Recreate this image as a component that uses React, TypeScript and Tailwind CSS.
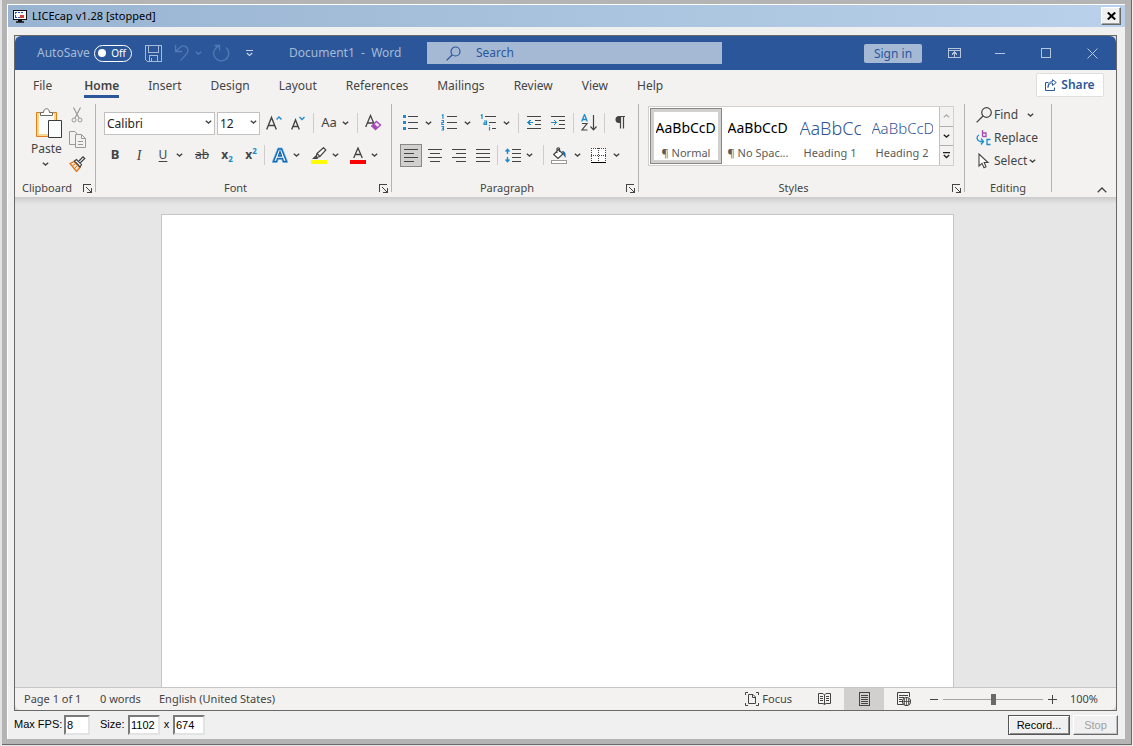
import type { ReactNode } from "react";

const INK = "#444444";
const BLUE = "#1e8bcd";

function Svg({ w, h, crisp = false, children }: { w: number; h: number; crisp?: boolean; children: ReactNode }) {
  return (
    <svg
      width={w}
      height={h}
      viewBox={`0 0 ${w} ${h}`}
      fill="none"
      shapeRendering={crisp ? "crispEdges" : undefined}
      className="shrink-0"
      aria-hidden="true"
    >
      {children}
    </svg>
  );
}

function Chevron({ color = INK }: { color?: string }) {
  return (
    <Svg w={7} h={4}>
      <path d="M0.8 0.7 3.5 3 6.2 0.7" stroke={color} strokeWidth="1.4" />
    </Svg>
  );
}

/* horizontal strokes given as [x, y, length] */
function Lines({ rows, color = INK }: { rows: number[][]; color?: string }) {
  return (
    <>
      {rows.map(([x, y, l], i) => (
        <rect key={i} x={x} y={y} width={l} height="1" fill={color} />
      ))}
    </>
  );
}

function IconButton({ label, children }: { label: string; children: ReactNode }) {
  return (
    <button aria-label={label} className="flex h-6 w-6 shrink-0 items-center justify-center">
      {children}
    </button>
  );
}

function Split({ label, wide = false, children }: { label: string; wide?: boolean; children: ReactNode }) {
  return (
    <div className="flex shrink-0 items-center">
      <IconButton label={label}>{children}</IconButton>
      <button
        aria-label={`${label} options`}
        className={wide ? "flex h-6 w-3 items-center justify-center" : "flex h-6 w-2 items-center justify-center"}
      >
        <Chevron />
      </button>
    </div>
  );
}

function Divider() {
  return <div className="mx-[3px] h-5 w-px shrink-0 bg-[#cfcdcb]" />;
}

function Launcher({ label }: { label: string }) {
  return (
    <button aria-label={label} className="flex h-4 w-3 items-center">
      <Svg w={9} h={9} crisp>
        <path d="M0.5 8V0.5H8M8.5 4V8.5H4M3 3l5 5" stroke={INK} />
      </Svg>
    </button>
  );
}

function Group({ name, launcher, className, children }: { name: string; launcher?: boolean; className: string; children: ReactNode }) {
  return (
    <>
      <section aria-label={name} className={`flex h-[92px] shrink-0 flex-col justify-between ${className}`}>
        <div>{children}</div>
        <div className="flex h-4 items-center text-[11px]">
          <span className={launcher ? "flex-1 pr-1 text-center" : "flex-1 text-center"}>{name}</span>
          {launcher && <Launcher label={`${name} settings`} />}
        </div>
      </section>
      <div className="h-[88px] w-px shrink-0 bg-[#b5b3b1]" />
    </>
  );
}

function Combo({ label, value, className }: { label: string; value: string; className: string }) {
  return (
    <div className={`relative shrink-0 ${className}`}>
      <select
        aria-label={label}
        className="h-[23px] w-full appearance-none border border-[#c3c1bf] bg-white px-[2px] text-[12px] text-[#222]"
      >
        <option>{value}</option>
      </select>
      <span className="pointer-events-none absolute top-[10px] right-[3px]">
        <Chevron />
      </span>
    </div>
  );
}

function TitleBar() {
  return (
    <header className="flex h-[34px] shrink-0 items-center bg-[#2b579a] text-[12px] text-[#a6bad6]">
      <div className="flex w-[412px] shrink-0 items-center pl-[22px]">
        <span className="w-[57px]">AutoSave</span>
        <button
          role="switch"
          aria-checked="false"
          aria-label="AutoSave"
          className="flex h-[17px] w-[38px] items-center justify-between rounded-full border border-white pr-[5px] pl-[3px] text-[10px] text-white"
        >
          <span className="h-2 w-2 rounded-full bg-white" />
          Off
        </button>
        <button aria-label="Save" className="ml-[13px]">
          <Svg w={17} h={17} crisp>
            <path d="M0.5 0.5H16.5V16.5H2.5L0.5 14.5ZM3.5 0.5V7.5H13.5V0.5M4.5 16.5V10.5H12.5V16.5M6.5 13v3" stroke="#a6bad6" />
          </Svg>
        </button>
        <button aria-label="Undo" className="ml-3">
          <Svg w={16} h={18}>
            <path d="M1.5 1V7.5H8M2 7 6.500 3C9.500 0.500 14 2.500 14 6.500C14 9 12.500 10 6.500 16.500" stroke="#5279b3" strokeWidth="1.300" />
          </Svg>
        </button>
        <button aria-label="Undo history" className="ml-[5px]">
          <Chevron color="#5279b3" />
        </button>
        <button aria-label="Repeat" className="ml-[10px]">
          <Svg w={18} h={18}>
            <path d="M2.500 1.500H7.500V6.500M14 3.500A7.500 7.500 0 1 1 7.500 2" stroke="#5279b3" strokeWidth="1.300" />
          </Svg>
        </button>
        <button aria-label="Customize toolbar" className="ml-4">
          <Svg w={7} h={7}>
            <path d="M0 0.500H7M0.800 3 3.500 5.500 6.200 3" stroke="#c4d1e4" strokeWidth="1.200" />
          </Svg>
        </button>
        <span className="ml-9 whitespace-pre">Document1  -  Word</span>
      </div>
      <div className="flex h-[22px] w-[295px] items-center bg-[#a5b9d4] pl-[19px] text-[#2b579a]">
        <Svg w={15} h={15}>
          <circle cx="9.500" cy="5.500" r="4.500" stroke="#2b579a" strokeWidth="1.200" />
          <path d="M6.300 8.700 0.600 14.400" stroke="#2b579a" strokeWidth="1.300" />
        </Svg>
        <input
          aria-label="Search"
          placeholder="Search"
          className="ml-[15px] w-0 flex-1 bg-transparent text-[12px] outline-none placeholder:text-[#2b579a]"
        />
      </div>
      <div className="flex-1" />
      <button className="h-[19px] w-[58px] rounded-xs bg-[#a5b9d4] text-[12px] leading-[19px] text-[#2b579a]">Sign in</button>
      <div className="ml-[9px] flex pr-px">
        <button aria-label="Ribbon display options" className="flex w-[46px] justify-center">
          <Svg w={13} h={10} crisp>
            <path d="M0.500 0.500H12.500V9.500H0.500ZM0.500 2.500H12.500M6.500 9V4M4 6.500 6.500 4 9 6.500" stroke="#b4c5dc" />
          </Svg>
        </button>
        <button aria-label="Minimize" className="flex w-[46px] items-center justify-center">
          <span className="h-px w-[10px] bg-[#b4c5dc]" />
        </button>
        <button aria-label="Maximize" className="flex w-[46px] items-center justify-center">
          <span className="h-[10px] w-[10px] border border-[#b4c5dc]" />
        </button>
        <button aria-label="Close document" className="flex w-[46px] items-center justify-center">
          <Svg w={11} h={11}>
            <path d="M0.500 0.500 10.500 10.500M10.500 0.500 0.500 10.500" stroke="#b4c5dc" />
          </Svg>
        </button>
      </div>
    </header>
  );
}

function Tabs() {
  return (
    <nav className="flex h-[30px] shrink-0 items-center justify-between pr-3 pl-[18px] text-[12px]">
      <div className="flex gap-[29px] pt-[2px]">
        <a href="#file">File</a>
        <a href="#home" className="relative ml-[3px] font-semibold">
          Home
          <span className="absolute top-[18px] left-0 h-[3px] w-full bg-[#2b579a]" />
        </a>
        <a href="#insert">Insert</a>
        <a href="#design">Design</a>
        <a href="#layout">Layout</a>
        <a href="#references">References</a>
        <a href="#mailings">Mailings</a>
        <a href="#review">Review</a>
        <a href="#view">View</a>
        <a href="#help">Help</a>
      </div>
      <button className="flex h-6 w-[68px] items-center justify-center gap-1 rounded-xs border border-[#e1dfdd] bg-white font-semibold text-[#2b579a]">
        <Svg w={12} h={12}>
          <path d="M3.500 3.500H0.500V11.500H9.500V8.500M3 8.500C3.500 5 5.500 4 7.500 4V6.500L11.300 3.500 7.500 0.700V2.500C4.500 2.500 3 5 3 8.500Z" stroke="#2b579a" />
        </Svg>
        Share
      </button>
    </nav>
  );
}

function ClipboardGroup() {
  return (
    <Group name="Clipboard" launcher className="w-[80px]">
      <div className="flex pt-[3px] pl-4">
        <button className="flex w-8 flex-col items-center text-[12px] leading-5">
          <span className="pl-1">
            <Svg w={28} h={32}>
              <path d="M1.500 5.500H21.500V29.500H1.500Z" fill="#f9d98f" stroke="#e07f1c" />
              <rect x="4" y="7" width="15" height="20" fill="#fafdfb" />
              <path d="M5.500 8.500V5.500H8.500C8.500 0.500 14.500 0.500 14.500 5.500H17.500V8.500Z" fill="#fff" stroke="#6b6b6b" />
              <path d="M13.500 13.500H26.500V30.500H13.500Z" fill="#fafdfb" stroke="#3b3b3b" />
            </Svg>
          </span>
          <span className="w-full pr-1 text-center">Paste</span>
          <span className="pt-[3px] pr-[3px]"><Chevron /></span>
        </button>
        <div className="flex flex-col gap-2 pl-[6px]">
          <button aria-label="Cut">
            <Svg w={16} h={16}>
              <path d="M4.500 0.500 10 11M11.500 0.500 6 11" stroke="#999" strokeWidth="1.200" />
              <circle cx="5" cy="13" r="2" stroke="#999" />
              <circle cx="11" cy="13" r="2" stroke="#999" />
            </Svg>
          </button>
          <button aria-label="Copy">
            <Svg w={17} h={17}>
              <path d="M6.500 13.500H0.500V0.500H6L8 3M6.500 3.500H12.500L16.500 7.500V16.500H6.500ZM12.500 3.500V7.500H16.500M9 10.500H14M9 13.500H14" stroke="#999" />
            </Svg>
          </button>
          <button aria-label="Format painter">
            <Svg w={17} h={16}>
              <path d="M1 7.500 5 5.500 11 11.500 7.500 15.500Z" fill="#fce3c8" stroke="#e0761b" strokeWidth="1.300" />
              <path d="M3.500 10 6 8M5.500 12.500 8 10" stroke="#e0761b" />
              <path d="M5.500 5 7.500 3.500 12.500 8.500 11 11ZM9.500 5.500 14 0.800 15.800 2.500 11 7" fill="#fff" stroke="#444" strokeWidth="1.200" />
            </Svg>
          </button>
        </div>
      </div>
    </Group>
  );
}

function FontGroup() {
  return (
    <Group name="Font" launcher className="w-[295px]">
      <div className="flex h-8 items-center pt-[5px] pl-2">
        <Combo label="Font name" value="Calibri" className="w-[111px]" />
        <Combo label="Font size" value="12" className="ml-[2px] w-[43px]" />
        <div className="w-[2px]" />
        <IconButton label="Grow font">
          <Svg w={16} h={16}>
            <path d="M0.700 14.500 5.500 2.500 10.300 14.500M2.400 10.500H8.600" stroke={INK} strokeWidth="1.400" />
            <path d="M10.500 4.500 13 2 15.500 4.500" stroke={BLUE} strokeWidth="1.400" />
          </Svg>
        </IconButton>
        <IconButton label="Shrink font">
          <Svg w={14} h={16}>
            <path d="M0.700 14.500 4.500 5 8.300 14.500M2 11.500H7" stroke={INK} strokeWidth="1.400" />
            <path d="M8.500 2 11 4.500 13.500 2" stroke={BLUE} strokeWidth="1.400" />
          </Svg>
        </IconButton>
        <Divider />
        <Split label="Change case"><span className="text-[13px]">Aa</span></Split>
        <div className="w-[5px]" />
        <Divider />
        <IconButton label="Clear formatting">
          <Svg w={17} h={17}>
            <path d="M0.700 13 5.500 1.500 9.500 11M2.400 9H8" stroke={INK} strokeWidth="1.300" />
            <path d="M11.500 7.500 15.500 11 10.500 15.500 6.800 12Z" fill="#f3e3f6" stroke="#a64bb5" strokeWidth="1.400" />
            <path d="M6.800 12 9.200 9.800 12.900 13.300 10.500 15.500Z" fill="#a64bb5" />
          </Svg>
        </IconButton>
      </div>
      <div className="flex h-8 items-center pt-[6px] pl-[7px]">
        <IconButton label="Bold"><span className="text-[13px] font-bold">B</span></IconButton>
        <IconButton label="Italic"><span className="font-['Liberation_Serif',serif] text-[14px] italic">I</span></IconButton>
        <Split label="Underline"><span className="text-[12px] underline underline-offset-2">U</span></Split>
        <div className="w-[7px]" />
        <IconButton label="Strikethrough"><span className="text-[12px] line-through">ab</span></IconButton>
        <div className="w-px" />
        <IconButton label="Subscript">
          <span className="text-[12px] font-bold">x</span><span className="pt-2 text-[8px] font-bold text-[#1e8bcd]">2</span>
        </IconButton>
        <IconButton label="Superscript">
          <span className="text-[12px] font-bold">x</span><span className="pb-2 text-[8px] font-bold text-[#1e8bcd]">2</span>
        </IconButton>
        <div className="ml-px h-5 w-px shrink-0 bg-[#cfcdcb]" />
        <div className="w-[3px]" />
        <Split label="Text effects">
          <Svg w={16} h={16}>
            <path d="M1.500 14.500 6.500 2H9.500L14.500 14.500H11.500L10.500 11.500H5.500L4.500 14.500ZM6.500 9H9.500L8 4.500Z" fill="#fff" stroke="#8cc4ee" strokeWidth="3" />
            <path d="M1.500 14.500 6.500 2H9.500L14.500 14.500H11.500L10.500 11.500H5.500L4.500 14.500ZM6.500 9H9.500L8 4.500Z" fill="#fff" stroke="#1569b0" strokeWidth="1.400" />
          </Svg>
        </Split>
        <div className="w-[7px]" />
        <Split label="Highlight color">
          <Svg w={16} h={17}>
            <path d="M6 6.500 12.500 0.700 14.800 3 9 9.500ZM6 6.500 5 10.500 9 9.500M5 9 2.500 11.500H6L7 10.500" fill="#fff" stroke={INK} strokeWidth="1.200" />
            <rect y="13" width="16" height="4" fill="#ff0" />
          </Svg>
        </Split>
        <div className="w-[7px]" />
        <Split label="Font color">
          <Svg w={16} h={17}>
            <path d="M3.700 11 8 1 12.300 11M5.200 7.500H10.800" stroke={INK} strokeWidth="1.300" />
            <rect y="13" width="16" height="4" fill="#f00" />
          </Svg>
        </Split>
      </div>
    </Group>
  );
}

function ParagraphGroup() {
  return (
    <Group name="Paragraph" launcher className="w-[246px]">
      <div className="flex h-8 items-center pt-[5px] pl-[6px]">
        <Split label="Bullets" wide>
          <Svg w={15} h={15} crisp>
            <rect width="3" height="3" fill={BLUE} />
            <rect y="6" width="3" height="3" fill={BLUE} />
            <rect y="12" width="3" height="3" fill={BLUE} />
            <Lines rows={[[5, 1, 10], [5, 7, 10], [5, 13, 10]]} />
          </Svg>
        </Split>
        <div className="w-[3px]" />
        <Split label="Numbering" wide>
          <Svg w={16} h={17}>
            <path d="M0.800 1.500 2 0.800V5M0.500 6.500H2.500V8.500H0.800V10.500H3M0.500 12.500H2.500V16H0.500M1 14.200H2.500" stroke={BLUE} strokeWidth="1.100" />
            <Lines rows={[[6, 2, 10], [6, 8, 10], [6, 14, 10]]} />
          </Svg>
        </Split>
        <div className="w-[3px]" />
        <Split label="Multilevel list" wide>
          <Svg w={16} h={17}>
            <path d="M0.800 1.500 2 0.800V5M4 7H6.500V10.500H4V8.800H6.500M9.500 11V12M9.500 13V16.500" stroke={BLUE} strokeWidth="1.200" />
            <Lines rows={[[5, 2, 11], [9, 8, 7], [12, 14, 4]]} />
          </Svg>
        </Split>
        <div className="w-[3px]" />
        <Divider />
        <IconButton label="Decrease indent">
          <Svg w={14} h={14} crisp>
            <Lines rows={[[0, 0, 14], [8, 4, 6], [8, 8, 6], [0, 12, 14]]} />
            <path d="M6 6.500H1M3.500 4 1 6.500 3.500 9" stroke={BLUE} />
          </Svg>
        </IconButton>
        <IconButton label="Increase indent">
          <Svg w={14} h={14} crisp>
            <Lines rows={[[0, 0, 14], [8, 4, 6], [8, 8, 6], [0, 12, 14]]} />
            <path d="M0 6.500H5M3 4 5.500 6.500 3 9" stroke={BLUE} />
          </Svg>
        </IconButton>
        <Divider />
        <IconButton label="Sort">
          <Svg w={17} h={17}>
            <path d="M0.700 7.500 3.500 0.500 6.300 7.500M1.500 5.500H5.500" stroke={BLUE} strokeWidth="1.300" />
            <path d="M1 9.500H6L1 16H6.500M12.500 1V16M9.500 12.500 12.500 15.800 15.500 12.500" stroke={INK} strokeWidth="1.200" />
          </Svg>
        </IconButton>
        <Divider />
        <IconButton label="Show formatting marks">
          <Svg w={10} h={13}>
            <path d="M5.500 0H4A3.500 3.500 0 0 0 4 7H5.500Z" fill={INK} />
            <path d="M4 0.500H10M5.500 0V12.500M8.500 0V12.500" stroke={INK} strokeWidth="1.200" />
          </Svg>
        </IconButton>
      </div>
      <div className="flex h-8 items-center pt-[6px] pl-2">
        <div className="flex gap-[2px]">
          <button aria-label="Align left" aria-pressed="true" className="flex h-[23px] w-[22px] items-center justify-center border border-[#8a8886] bg-[#d2d0ce]">
            <Svg w={14} h={13} crisp><Lines rows={[[0, 0, 14], [0, 4, 10], [0, 8, 14], [0, 12, 10]]} /></Svg>
          </button>
          <button aria-label="Align center" className="flex h-[23px] w-[22px] items-center justify-center">
            <Svg w={14} h={13} crisp><Lines rows={[[0, 0, 14], [2, 4, 10], [0, 8, 14], [2, 12, 10]]} /></Svg>
          </button>
          <button aria-label="Align right" className="flex h-[23px] w-[22px] items-center justify-center">
            <Svg w={14} h={13} crisp><Lines rows={[[0, 0, 14], [4, 4, 10], [0, 8, 14], [4, 12, 10]]} /></Svg>
          </button>
          <button aria-label="Justify" className="flex h-[23px] w-[22px] items-center justify-center">
            <Svg w={14} h={13} crisp><Lines rows={[[0, 0, 14], [0, 4, 14], [0, 8, 14], [0, 12, 14]]} /></Svg>
          </button>
        </div>
        <Divider />
        <Split label="Line spacing">
          <Svg w={16} h={15}>
            <path d="M2.500 1.500V6M2.500 9V13.500M0.500 3.500 2.500 1.200 4.500 3.500M0.500 11.500 2.500 13.800 4.500 11.500" stroke={BLUE} strokeWidth="1.400" />
            <Lines rows={[[7, 1, 9], [7, 5, 9], [7, 9, 9], [7, 13, 9]]} />
          </Svg>
        </Split>
        <div className="w-[7px]" />
        <Divider />
        <Split label="Shading" wide>
          <Svg w={16} h={17}>
            <path d="M7.500 2.500 12 7 7 11.500 2.700 7.500ZM6 6V1.500Q7.500 0 8.500 1.500V5" fill="#fff" stroke={INK} strokeWidth="1.200" />
            <path d="M11 4C14 4 15 6 14.500 11L12.500 8Z" fill="#1569b0" />
            <rect x="0.500" y="13.500" width="15" height="3" fill="#fff" stroke="#999" />
          </Svg>
        </Split>
        <div className="w-[3px]" />
        <Split label="Borders" wide>
          <Svg w={15} h={15} crisp>
            <rect width="15" height="15" fill="#fff" />
            <path d="M0 0.500H15M0.500 0V14M14.500 0V14M0 7.500H15M7.500 0V14" stroke={INK} strokeDasharray="1 1" />
            <rect y="14" width="15" height="1" fill="#000" />
          </Svg>
        </Split>
      </div>
    </Group>
  );
}

function StyleCard({ sample, name, className, selected = false }: { sample: string; name: string; className: string; selected?: boolean }) {
  return (
    <button
      className={
        selected
          ? "h-14 w-[72px] shrink-0 border border-[#8a8886] ring-[3px] ring-[#d2d0ce] ring-inset"
          : "h-14 w-[72px] shrink-0 border border-transparent"
      }
    >
      <span className={`mx-auto block h-7 w-[61px] overflow-hidden pt-px text-left leading-8 whitespace-nowrap ${className}`}>{sample}</span>
      <span className="block pt-[6px] text-[11px] leading-4 whitespace-nowrap text-[#5c5a58]">{name}</span>
    </button>
  );
}

function StylesGroup() {
  return (
    <Group name="Styles" launcher className="w-[325px]">
      <div className="mt-[2px] ml-[9px] flex h-[60px] w-[306px] border border-[#d2d0ce] bg-white">
        <div className="flex flex-1 pt-px pl-px">
          <StyleCard sample="AaBbCcD" name="¶ Normal" className="text-[14px] text-black" selected />
          <StyleCard sample="AaBbCcD" name="¶ No Spac..." className="text-[14px] text-black" />
          <StyleCard sample="AaBbCcD" name="Heading 1" className="text-[18px] font-light text-[#2f5496]" />
          <StyleCard sample="AaBbCcD" name="Heading 2" className="text-[15px] font-light text-[#2f5496]" />
        </div>
        <div className="flex w-[14px] shrink-0 flex-col border-l border-[#c3c1bf] bg-[#f3f2f1]">
          <button aria-label="Previous styles" className="flex flex-1 items-center justify-center">
            <span className="rotate-180"><Chevron color="#b0aeac" /></span>
          </button>
          <button aria-label="Next styles" className="flex flex-1 items-center justify-center border-y border-[#b0aeac]">
            <Chevron color="#222" />
          </button>
          <button aria-label="More styles" className="flex flex-1 items-center justify-center">
            <Svg w={7} h={7}>
              <path d="M0 0.500H7M0.800 3 3.500 5.500 6.200 3" stroke="#222" strokeWidth="1.300" />
            </Svg>
          </button>
        </div>
      </div>
    </Group>
  );
}

function EditingGroup() {
  return (
    <Group name="Editing" className="w-[86px]">
      <div className="-mt-px flex flex-col pl-[11px] text-[12px]">
        <button className="flex h-[23px] items-center gap-[2px]">
          <Svg w={16} h={16}>
            <circle cx="10.500" cy="5.500" r="4.800" stroke={INK} strokeWidth="1.200" />
            <path d="M7 9 0.600 15.400" stroke={INK} strokeWidth="1.300" />
          </Svg>
          Find
          <span className="ml-[7px]"><Chevron /></span>
        </button>
        <button className="flex h-[23px] items-center gap-[2px]">
          <Svg w={16} h={16}>
            <path d="M6.500 0V6.500M6.500 3H10V6.500H6.500" stroke="#a64bb5" strokeWidth="1.300" />
            <path d="M14.500 9.500H11V14.500H14.500M3 5C0.500 6 0 10 4 11.500H7M5 8.500 7.500 11.500 5 14.500" stroke={BLUE} strokeWidth="1.300" />
          </Svg>
          Replace
        </button>
        <button className="flex h-[23px] items-center gap-[2px]">
          <Svg w={16} h={16}>
            <path d="M3 1V13L6 10.300 8 14.700 10 13.800 8.200 9.500H12Z" fill="#fff" stroke={INK} strokeWidth="1.100" />
          </Svg>
          Select
          <Chevron />
        </button>
      </div>
    </Group>
  );
}

function StatusBar() {
  return (
    <footer className="flex h-[23px] shrink-0 items-center border-t border-[#c8c6c4] pr-[18px] pl-[9px] text-[11px]">
      <span className="w-[76px]">Page 1 of 1</span>
      <span className="w-[59px]">0 words</span>
      <span>English (United States)</span>
      <div className="flex-1" />
      <button className="flex items-center gap-[3px]">
        <Svg w={14} h={14}>
          <path d="M3 0.500H0.500V3M11 0.500H13.500V3M3 13.500H0.500V11M11 13.500H13.500V11M3.500 2.500H8L10.500 5V11.500H3.500ZM7.500 2.500V5.500H10.500" stroke={INK} />
        </Svg>
        Focus
      </button>
      <div className="ml-3 flex">
        <button aria-label="Read mode" className="flex h-[22px] w-10 items-center justify-center">
          <Svg w={13} h={12}>
            <path d="M0.500 0.500H5L6.500 2 8 0.500H12.500V10.500H8L6.500 11.500 5 10.500H0.500ZM6.500 2V11.500M2 3.500H5M2 5.500H5M2 7.500H5M8 3.500H11M8 5.500H11M8 7.500H11" stroke={INK} />
          </Svg>
        </button>
        <button aria-label="Print layout" aria-pressed="true" className="flex h-[22px] w-10 items-center justify-center bg-[#d2d0ce]">
          <Svg w={11} h={14} crisp>
            <path d="M0.500 0.500H10.500V13.500H0.500ZM2 3.500H9M2 5.500H9M2 7.500H9M2 9.500H9M2 11.500H9" stroke={INK} />
          </Svg>
        </button>
        <button aria-label="Web layout" className="flex h-[22px] w-10 items-center justify-center">
          <Svg w={14} h={14}>
            <path d="M6 12.500H0.500V0.500H12.500V5M2 3.500H11M2 5.500H7M2 7.500H5M2 9.500H5" stroke={INK} />
            <circle cx="9.500" cy="9.500" r="4" fill="#f3f2f1" stroke={INK} strokeWidth="1.200" />
            <path d="M5.500 9.500H13.500M9.500 5.500V13.500M7.500 6.500V12.500M11.500 6.500V12.500" stroke={INK} strokeWidth="0.800" />
          </Svg>
        </button>
      </div>
      <button aria-label="Zoom out" className="ml-[6px] flex h-4 w-2 items-center">
        <span className="h-px w-2 bg-[#444]" />
      </button>
      <input
        type="range"
        aria-label="Zoom"
        min="0"
        max="100"
        defaultValue="50"
        className="mx-[5px] h-[11px] w-[100px] appearance-none bg-transparent [&::-webkit-slider-runnable-track]:h-px [&::-webkit-slider-runnable-track]:bg-[#a6a4a2] [&::-webkit-slider-thumb]:mt-[-5px] [&::-webkit-slider-thumb]:h-[11px] [&::-webkit-slider-thumb]:w-[5px] [&::-webkit-slider-thumb]:appearance-none [&::-webkit-slider-thumb]:bg-[#6b6967]"
      />
      <button aria-label="Zoom in">
        <Svg w={9} h={9} crisp><path d="M0 4.500H9M4.500 0V9" stroke={INK} /></Svg>
      </button>
      <span className="ml-[10px] w-[31px] text-right">100%</span>
    </footer>
  );
}

function Field({ label, value, className }: { label: string; value: string; className: string }) {
  return (
    <input
      aria-label={label}
      defaultValue={value}
      className={`h-5 border-2 border-t-[#7a7a7a] border-r-[#e3e3e3] border-b-[#e3e3e3] border-l-[#7a7a7a] bg-white text-[11px] outline-none ${className}`}
    />
  );
}

function RecorderBar() {
  return (
    <div className="flex h-7 shrink-0 items-center pr-[7px] pb-px pl-[6px] font-['Liberation_Sans',sans-serif] text-[11px] text-black">
      <span className="w-[50px]">Max FPS:</span>
      <Field label="Max FPS" value="8" className="w-[26px] pl-px" />
      <span className="ml-[10px] w-7">Size:</span>
      <Field label="Width" value="1102" className="w-8 pl-px" />
      <span className="w-[13px] text-center">x</span>
      <Field label="Height" value="674" className="w-8 pl-px" />
      <div className="flex-1" />
      <button className="h-5 w-[62px] border border-[#555] text-[11px] leading-4 shadow-[inset_1px_1px_0_#fff,inset_-1px_-1px_0_#888]">Record...</button>
      <button disabled className="ml-[3px] h-5 w-[45px] border border-t-white border-r-[#696969] border-b-[#696969] border-l-white text-[11px] leading-4 text-[#a0a0a0] shadow-[inset_-1px_-1px_0_#c0c0c0]">
        Stop
      </button>
    </div>
  );
}

export default function App() {
  return (
    <div className="flex h-screen min-h-[400px] border-r border-b border-l-2 border-r-[#f0f0f0] border-b-[#e8e8e8] border-l-[#e3e3e3] font-['Noto_Sans',sans-serif] text-[#444]">
      <div className="flex min-w-0 flex-1 border-r border-b border-[#696969] bg-[#b4b4b4] pt-1 pr-[6px] pb-[5px] pl-[5px]">
        <div className="flex min-w-0 flex-1 flex-col border-t border-l border-white bg-[#f0f0f0]">
          <div className="flex h-[22px] shrink-0 items-center bg-linear-to-r from-[#99b4d1] to-[#b9d1ea] pr-1 pl-[5px] text-[11px] text-black">
            <Svg w={14} h={13}>
              <rect x="0.500" y="0.500" width="13" height="9" fill="#fff" stroke="#111" />
              <path d="M2 2.500H11M2.500 2V8M2 7.500H7" stroke="#2b4fc0" strokeDasharray="2 1" />
              <rect x="7" y="5" width="4" height="3" fill="#d6453d" />
              <path d="M5 10.500H9M3 12H11" stroke="#111" strokeWidth="1.500" />
            </Svg>
            <span className="ml-[5px] flex-1">LICEcap v1.28 [stopped]</span>
            <button
              aria-label="Close"
              className="flex h-[18px] w-5 items-center justify-center border border-t-white border-r-[#696969] border-b-[#696969] border-l-white bg-[#f0f0f0] shadow-[inset_-1px_-1px_0_#a0a0a0]"
            >
              <Svg w={9} h={8}>
                <path d="M0.800 0.500 8.200 7.500M8.200 0.500 0.800 7.500" stroke="#000" strokeWidth="2" />
              </Svg>
            </button>
          </div>
          <div className="mt-2 mr-2 ml-[6px] flex min-h-0 flex-1 flex-col border border-[#696969] bg-[#d8d8d8]">
            <div className="flex min-h-0 flex-1 flex-col overflow-hidden rounded-md bg-[#f3f2f1]">
              <TitleBar />
              <Tabs />
              <div className="flex shrink-0 pt-1 pb-px">
                <ClipboardGroup />
                <FontGroup />
                <ParagraphGroup />
                <StylesGroup />
                <EditingGroup />
                <div className="flex flex-1 items-end justify-end pr-[9px] pb-[3px]">
                  <button aria-label="Collapse ribbon">
                    <Svg w={10} h={6}><path d="M0.700 5.300 5 1 9.300 5.300" stroke={INK} strokeWidth="1.300" /></Svg>
                  </button>
                </div>
              </div>
              <main className="flex min-h-0 flex-1 flex-col bg-[#e6e6e6]">
                <div className="h-[7px] shrink-0 bg-linear-to-b from-[#cbcbcb] to-[#e6e6e6]" />
                <div className="flex min-h-0 flex-1 justify-center pt-[10px] pr-[17px]">
                  <div className="w-full max-w-[793px] border border-b-0 border-[#c6c6c6] bg-white" />
                </div>
              </main>
              <StatusBar />
            </div>
          </div>
          <RecorderBar />
        </div>
      </div>
    </div>
  );
}
